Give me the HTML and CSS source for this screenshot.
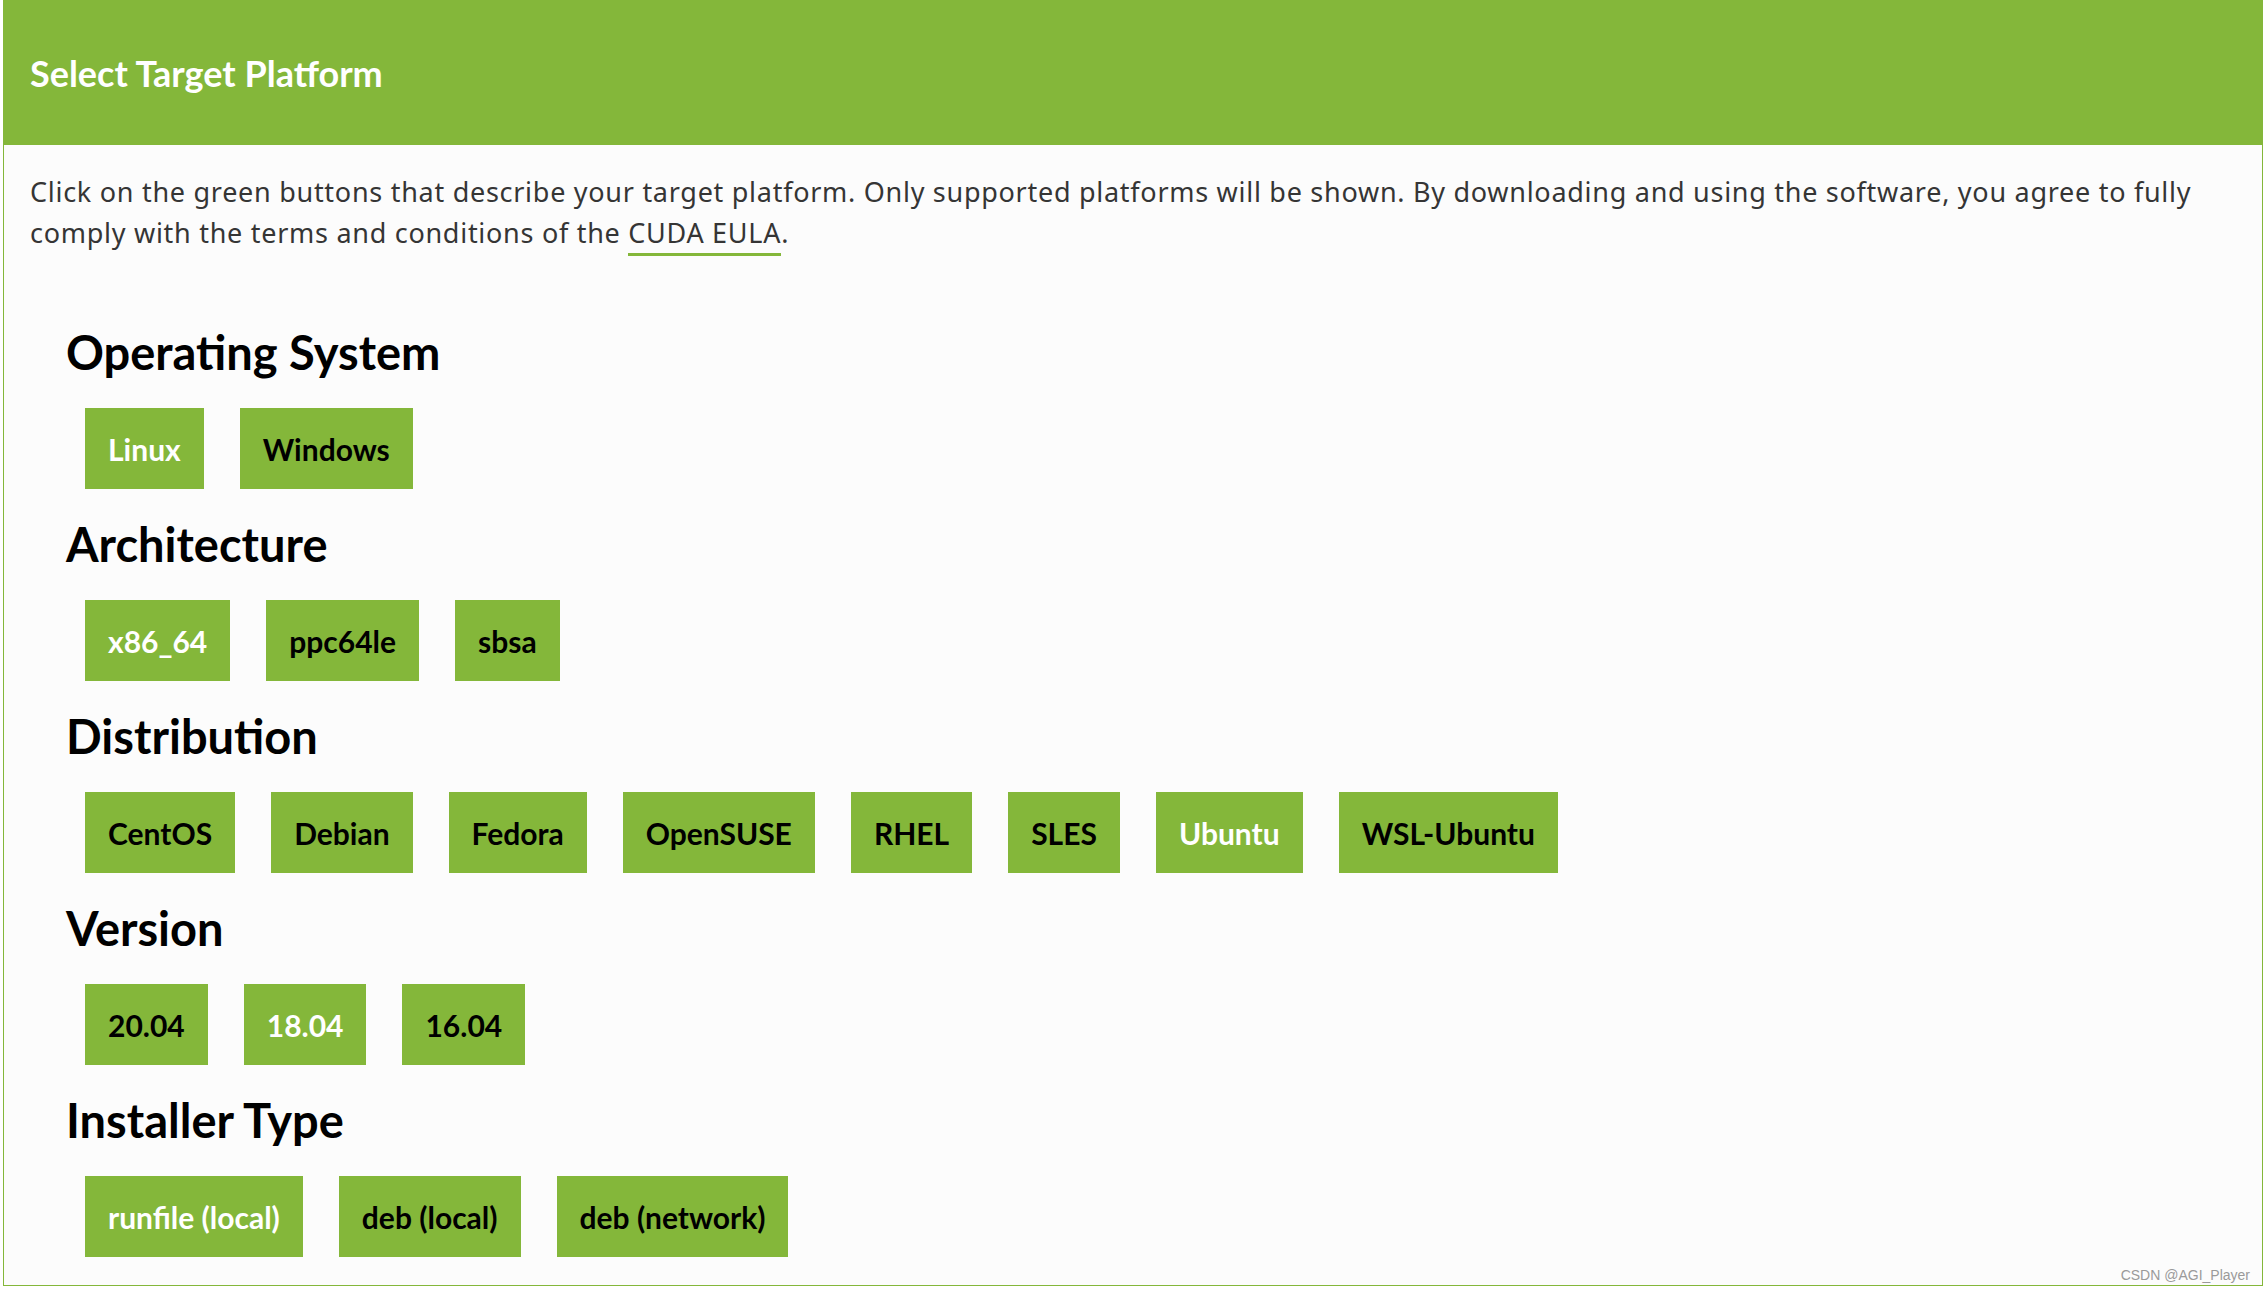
FILE: index.html
```html
<!DOCTYPE html>
<html lang="en">
<head>
<meta charset="utf-8">
<title>Select Target Platform</title>
<link rel="stylesheet" href="styles.css">
</head>
<body>
<div class="panel">
  <div class="panel-header">
    <h1 class="panel-title">Select Target Platform</h1>
  </div>
  <div class="panel-body">
    <p class="intro">Click on the green buttons that describe your target platform. Only supported platforms will be shown. By downloading and using the software, you agree to fully comply with the terms and conditions of the <a class="eula" href="#">CUDA EULA</a>.</p>

    <div class="selectors">
      <section class="selector">
        <h2 class="selector-title">Operating System</h2>
        <div class="options">
          <span class="opt active">Linux</span>
          <span class="opt">Windows</span>
        </div>
      </section>

      <section class="selector">
        <h2 class="selector-title">Architecture</h2>
        <div class="options">
          <span class="opt active">x86_64</span>
          <span class="opt">ppc64le</span>
          <span class="opt">sbsa</span>
        </div>
      </section>

      <section class="selector">
        <h2 class="selector-title">Distribution</h2>
        <div class="options">
          <span class="opt">CentOS</span>
          <span class="opt">Debian</span>
          <span class="opt">Fedora</span>
          <span class="opt">OpenSUSE</span>
          <span class="opt">RHEL</span>
          <span class="opt">SLES</span>
          <span class="opt active">Ubuntu</span>
          <span class="opt">WSL-Ubuntu</span>
        </div>
      </section>

      <section class="selector">
        <h2 class="selector-title">Version</h2>
        <div class="options">
          <span class="opt">20.04</span>
          <span class="opt active">18.04</span>
          <span class="opt">16.04</span>
        </div>
      </section>

      <section class="selector">
        <h2 class="selector-title">Installer Type</h2>
        <div class="options">
          <span class="opt active">runfile (local)</span>
          <span class="opt">deb (local)</span>
          <span class="opt">deb (network)</span>
        </div>
      </section>
    </div>
  </div>
  <span class="watermark">CSDN @AGI_Player</span>
</div>
</body>
</html>
```

FILE: styles.css
```css
html, body {
  margin: 0;
  padding: 0;
  background: #ffffff;
}

body {
  font-family: Lato, "Noto Sans", "Liberation Sans", sans-serif;
  color: #333333;
}

.panel {
  position: relative;
  margin: 0 5px 0 3px;
  border: 1px solid #84b73a;
  border-top: none;
  background: #fcfcfc;
}

.panel-header {
  height: 145px;
  background: #84b73a;
  display: flex;
  align-items: center;
  padding: 0 27px;
  margin: 0 -1px;
}

.panel-title {
  margin: 0;
  font-size: 36px;
  font-weight: 700;
  color: #ffffff;
  line-height: 1;
}

.panel-body {
  padding: 27px 26px 28px;
}

.intro {
  margin: 0;
  font-family: "Noto Sans", "Open Sans", sans-serif;
  font-size: 27px;
  letter-spacing: 0.72px;
  line-height: 40.5px;
  color: #353535;
}

.eula {
  color: #353535;
  text-decoration: none;
  border-bottom: 3px solid #84b73a;
  padding-bottom: 2px;
}

.selectors {
  margin-top: 77px;
  padding-left: 36px;
}

.selector + .selector {
  margin-top: 33px;
}

.selector-title {
  margin: 0 0 33px;
  font-size: 47px;
  line-height: 45px;
  font-weight: 700;
  color: #000000;
}

.options {
  display: flex;
  gap: 36px;
  padding-left: 19px;
}

.opt {
  display: flex;
  align-items: center;
  height: 81px;
  padding: 0 23px;
  background: #84b73a;
  font-size: 30px;
  font-weight: 700;
  color: #000000;
}

.opt.active {
  color: #ffffff;
}

.watermark {
  position: absolute;
  right: 12px;
  bottom: 2px;
  font-family: "Liberation Sans", Arial, sans-serif;
  font-size: 14px;
  color: #9a9a9a;
}
```
